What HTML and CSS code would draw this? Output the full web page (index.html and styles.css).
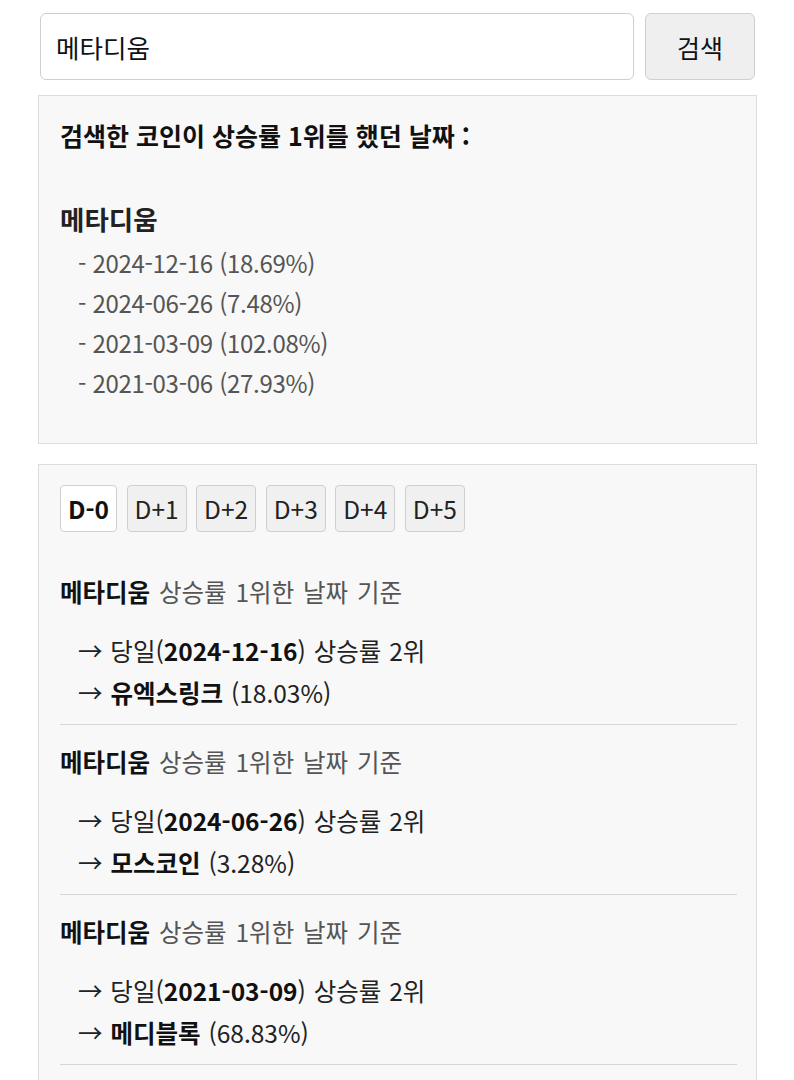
FILE: index.html
```html
<!DOCTYPE html>
<html lang="ko">
<head>
  <meta charset="UTF-8" />
  <meta name="viewport" content="width=device-width, initial-scale=1"/>
  <title>코인 상승률 1위 검색</title>
  <link rel="stylesheet" href="styles.css">
</head>
<body>
  <div class="search-row">
    <input type="text" id="coinInput" value="메타디움">
    <button id="searchBtn">검색</button>
  </div>

  <div class="box dates">
    <h3 class="dates-title">검색한 코인이 상승률 1위를 했던 날짜 :</h3>
    <h2 class="coin-name">메타디움</h2>
    <ul class="date-list">
      <li>- 2024-12-16 (18.69%)</li>
      <li>- 2024-06-26 (7.48%)</li>
      <li>- 2021-03-09 (102.08%)</li>
      <li>- 2021-03-06 (27.93%)</li>
    </ul>
  </div>

  <div class="box ranks">
    <div class="tabs">
      <button class="tab active">D-0</button>
      <button class="tab">D+1</button>
      <button class="tab">D+2</button>
      <button class="tab">D+3</button>
      <button class="tab">D+4</button>
      <button class="tab">D+5</button>
    </div>

    <div class="entry">
      <div class="entry-head"><b>메타디움</b> 상승률 1위한 날짜 기준</div>
      <div class="entry-line">→ 당일(<b>2024-12-16</b>) 상승률 2위</div>
      <div class="entry-line">→ <b>유엑스링크</b> (18.03%)</div>
    </div>
    <div class="entry">
      <div class="entry-head"><b>메타디움</b> 상승률 1위한 날짜 기준</div>
      <div class="entry-line">→ 당일(<b>2024-06-26</b>) 상승률 2위</div>
      <div class="entry-line">→ <b>모스코인</b> (3.28%)</div>
    </div>
    <div class="entry">
      <div class="entry-head"><b>메타디움</b> 상승률 1위한 날짜 기준</div>
      <div class="entry-line">→ 당일(<b>2021-03-09</b>) 상승률 2위</div>
      <div class="entry-line">→ <b>메디블록</b> (68.83%)</div>
    </div>
  </div>
</body>
</html>
```

FILE: styles.css
```css
body {
  font-family: "Noto Sans CJK KR", "Noto Sans", sans-serif;
  background-color: #ffffff;
  color: #222;
  margin: 0;
  padding: 13px 37px 0 38px;
}

.search-row {
  display: flex;
  gap: 11px;
  margin: 0 2px;
}

.search-row input {
  flex: 1;
  height: 67px;
  box-sizing: border-box;
  border: 1px solid #cfcfcf;
  border-radius: 6px;
  padding: 0 15px;
  font-family: inherit;
  font-size: 25.5px;
  color: #111;
  outline: none;
}

.search-row button {
  width: 110px;
  height: 67px;
  background-color: #efefef;
  border: 1px solid #cfcfcf;
  border-radius: 6px;
  font-family: inherit;
  font-size: 25px;
  color: #111;
  cursor: pointer;
}

.box {
  background-color: #f8f8f8;
  border: 1px solid #dcdcdc;
  padding: 0 19px 0 21px;
}

.dates {
  margin-top: 15px;
  padding-top: 23px;
  padding-bottom: 40px;
}

.dates-title {
  font-size: 25px;
  font-weight: bold;
  line-height: 32px;
  margin: 0;
  color: #111;
}

.coin-name {
  font-size: 26.5px;
  font-weight: bold;
  line-height: 40px;
  margin: 48px 0 4px;
  color: #222;
}

.date-list {
  list-style: none;
  margin: 0;
  padding: 0 0 0 18px;
}

.date-list li {
  font-size: 24px;
  letter-spacing: -0.3px;
  line-height: 40px;
  color: #555;
}

.ranks {
  margin-top: 20px;
  padding-top: 20px;
}

.tabs {
  display: flex;
  gap: 9.5px;
  margin-bottom: 42px;
}

.tab {
  height: 47px;
  padding: 0 7px;
  background-color: #f0f0f0;
  border: 1px solid #cfcfcf;
  border-radius: 4px;
  font-family: inherit;
  font-size: 24.5px;
  color: #222;
  cursor: pointer;
}

.tab.active {
  background-color: #ffffff;
  font-weight: bold;
  color: #111;
}

.entry {
  border-bottom: 1px solid #d6d6d6;
  padding-bottom: 10px;
  margin-bottom: 19px;
}

.entry-head {
  font-size: 24.5px;
  word-spacing: 2px;
  line-height: 36px;
  color: #555;
  margin-bottom: 20px;
}

.entry-head b {
  color: #111;
}

.entry-line {
  font-size: 24.5px;
  word-spacing: 1px;
  line-height: 42px;
  color: #222;
  padding-left: 18px;
}

.entry-line b {
  color: #111;
}
```
